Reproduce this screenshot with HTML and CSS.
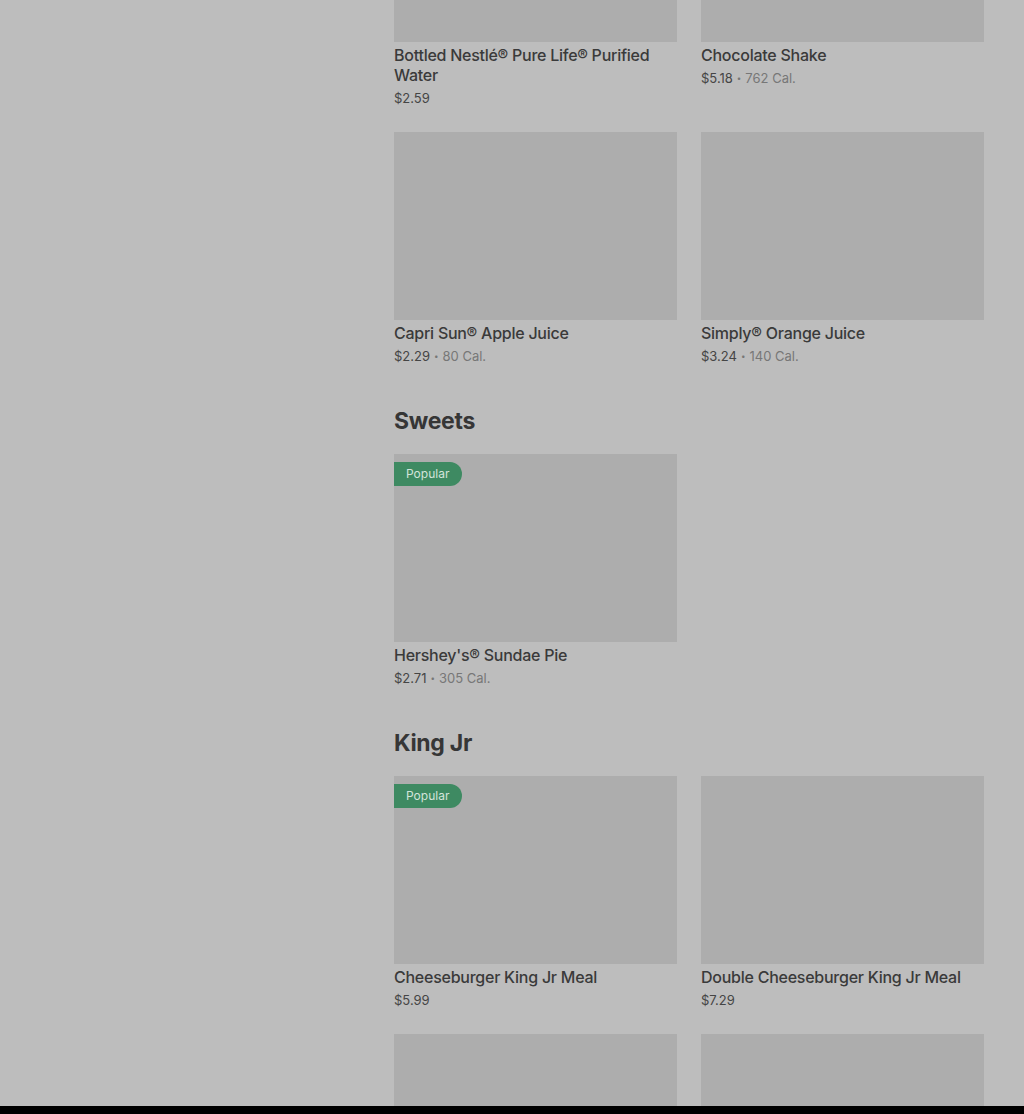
FILE: index.html
```html
<!DOCTYPE html>
<html lang="en">
<head>
    <meta charset="UTF-8">
    <meta name="viewport" content="width=device-width, initial-scale=1.0">
    <title>Menu</title>
    <link rel="stylesheet" href="styles.css">
</head>
<body>
    <div class="page">
        <aside class="sidebar"></aside>

        <main class="menu">
            <!-- Drinks (scrolled past the heading) -->
            <section class="category">
                <div class="items">
                    <div class="item">
                        <div class="thumb"></div>
                        <h3 class="item-name">Bottled Nestlé® Pure Life® Purified Water</h3>
                        <p class="item-meta"><span class="price">$2.59</span></p>
                    </div>
                    <div class="item">
                        <div class="thumb"></div>
                        <h3 class="item-name">Chocolate Shake</h3>
                        <p class="item-meta"><span class="price">$5.18</span><span class="dot">•</span><span class="cal">762 Cal.</span></p>
                    </div>
                    <div class="item">
                        <div class="thumb"></div>
                        <h3 class="item-name">Capri Sun® Apple Juice</h3>
                        <p class="item-meta"><span class="price">$2.29</span><span class="dot">•</span><span class="cal">80 Cal.</span></p>
                    </div>
                    <div class="item">
                        <div class="thumb"></div>
                        <h3 class="item-name">Simply® Orange Juice</h3>
                        <p class="item-meta"><span class="price">$3.24</span><span class="dot">•</span><span class="cal">140 Cal.</span></p>
                    </div>
                </div>
            </section>

            <section class="category">
                <h2 class="category-title">Sweets</h2>
                <div class="items">
                    <div class="item">
                        <div class="thumb">
                            <span class="badge">Popular</span>
                        </div>
                        <h3 class="item-name">Hershey's® Sundae Pie</h3>
                        <p class="item-meta"><span class="price">$2.71</span><span class="dot">•</span><span class="cal">305 Cal.</span></p>
                    </div>
                </div>
            </section>

            <section class="category">
                <h2 class="category-title">King Jr</h2>
                <div class="items">
                    <div class="item">
                        <div class="thumb">
                            <span class="badge">Popular</span>
                        </div>
                        <h3 class="item-name">Cheeseburger King Jr Meal</h3>
                        <p class="item-meta"><span class="price">$5.99</span></p>
                    </div>
                    <div class="item">
                        <div class="thumb"></div>
                        <h3 class="item-name">Double Cheeseburger King Jr Meal</h3>
                        <p class="item-meta"><span class="price">$7.29</span></p>
                    </div>
                    <div class="item">
                        <div class="thumb"></div>
                    </div>
                    <div class="item">
                        <div class="thumb"></div>
                    </div>
                </div>
            </section>
        </main>
    </div>

    <div class="bottom-bar"></div>
</body>
</html>
```

FILE: styles.css
```css
:root {
    --backdrop: #bdbdbd;
    --thumb: #adadad;
    --text-color: #3a3a3a;
    --muted: #777;
    --badge: #3e8a62;
}

html, body {
    height: 100%;
}

body {
    font-family: Inter, 'Noto Sans', sans-serif;
    color: var(--text-color);
    background-color: var(--backdrop);
    margin: 0;
    overflow: hidden;
}

.page {
    display: grid;
    grid-template-columns: 394px 590px;
}

.menu {
    margin-top: -146px;
}

.category-title {
    font-size: 23px;
    font-weight: 700;
    line-height: 32px;
    letter-spacing: -0.3px;
    margin: 15px 0 17px;
    color: #363636;
}

.items {
    display: grid;
    grid-template-columns: 283px 283px;
    column-gap: 24px;
}

.item {
    padding-bottom: 24px;
}

.thumb {
    position: relative;
    height: 188px;
    background-color: var(--thumb);
}

.badge {
    position: absolute;
    top: 8px;
    left: 0;
    height: 24px;
    padding: 0 12px 0 12px;
    width: 44px;
    line-height: 24px;
    font-size: 12px;
    color: #d3e4da;
    background-color: var(--badge);
    border-radius: 0 12px 12px 0;
}

.item-name {
    font-size: 16px;
    font-weight: 500;
    line-height: 20px;
    letter-spacing: -0.25px;
    margin: 3px 0 0;
}

.item-meta {
    font-size: 13px;
    line-height: 20px;
    margin: 3px 0 0;
    color: var(--muted);
}

.price {
    color: #454545;
}

.dot {
    margin: 0 4px;
    font-size: 8px;
    vertical-align: 2px;
}

.bottom-bar {
    position: fixed;
    left: 0;
    right: 0;
    bottom: 0;
    height: 8px;
    background: #000;
}
```
